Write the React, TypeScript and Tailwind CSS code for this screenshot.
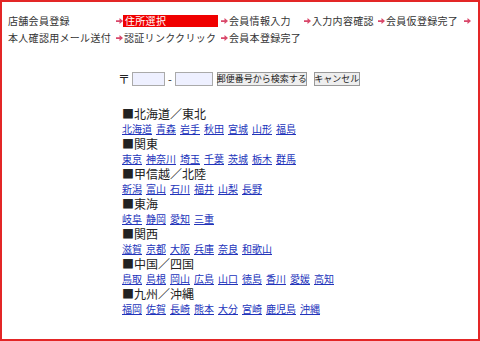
const regions: { name: string; prefs: string[] }[] = [
  { name: "北海道／東北", prefs: ["北海道", "青森", "岩手", "秋田", "宮城", "山形", "福島"] },
  { name: "関東", prefs: ["東京", "神奈川", "埼玉", "千葉", "茨城", "栃木", "群馬"] },
  { name: "甲信越／北陸", prefs: ["新潟", "富山", "石川", "福井", "山梨", "長野"] },
  { name: "東海", prefs: ["岐阜", "静岡", "愛知", "三重"] },
  { name: "関西", prefs: ["滋賀", "京都", "大阪", "兵庫", "奈良", "和歌山"] },
  { name: "中国／四国", prefs: ["鳥取", "島根", "岡山", "広島", "山口", "徳島", "香川", "愛媛", "高知"] },
  { name: "九州／沖縄", prefs: ["福岡", "佐賀", "長崎", "熊本", "大分", "宮崎", "鹿児島", "沖縄"] },
];

function Arrow() {
  return (
    <svg width="8" height="8" viewBox="0 0 8 8">
      <path d="M0 3h4V0.5L8 4 4 7.5V5H0z" fill="#d9476a" />
    </svg>
  );
}

function Step({ label, active }: { label: string; active?: boolean }) {
  return (
    <>
      <div className="flex h-[17px] items-center pl-[3px]">
        <Arrow />
      </div>
      <div className="flex h-[17px] items-center">
        <span
          className={
            active
              ? "flex h-[12px] w-full items-center bg-[#f00000] pl-[2px] text-white"
              : "pl-[1px]"
          }
        >
          {label}
        </span>
      </div>
    </>
  );
}

export default function App() {
  return (
    <div
      className="h-[341px] w-[480px] overflow-hidden border-2 border-[#e32626] bg-white text-[#333]"
      style={{ fontFamily: '"Noto Sans CJK JP", sans-serif' }}
    >
      <div className="grid grid-cols-[105px_10px_95px_10px_73px_10px_64px_10px_76px_10px] whitespace-nowrap pl-[6px] pt-[10px] text-[10px] leading-[17px] tracking-[0.3px]">
        <div className="flex h-[17px] items-center">店舗会員登録</div>
        <Step label="住所選択" active />
        <Step label="会員情報入力" />
        <Step label="入力内容確認" />
        <Step label="会員仮登録完了" />
        <div className="flex h-[17px] items-center pl-[3px]">
          <Arrow />
        </div>
        <div className="flex h-[17px] items-center">本人確認用メール送付</div>
        <Step label="認証リンククリック" />
        <Step label="会員本登録完了" />
      </div>

      <div className="pl-[116px] pt-[26px]">
        <div className="flex h-[14px] items-center whitespace-nowrap text-[11px] text-[#222]">
          <span className="mr-[2px] text-[12px] leading-[14px]">〒</span>
          <input className="h-[14px] w-[33px] border border-[#aaa] bg-[#eef0ff] outline-none" />
          <span className="mx-[3px] leading-[14px]">-</span>
          <input className="h-[14px] w-[38px] border border-[#aaa] bg-[#eef0ff] outline-none" />
          <button className="ml-[4px] flex h-[14px] w-[90px] items-center justify-center border border-[#999] bg-[#eeeeee] text-[9px] leading-[12px] text-[#222]">
            郵便番号から検索する
          </button>
          <button className="ml-[7px] flex h-[14px] w-[46px] items-center justify-center border border-[#999] bg-[#eeeeee] text-[9px] leading-[12px] text-[#222]">
            キャンセル
          </button>
        </div>

        <div className="mt-[20px] pl-[4px]">
          {regions.map((r) => (
            <div key={r.name}>
              <div className="flex h-[15px] items-center whitespace-nowrap text-[12px] text-[#222]">
                ■{r.name}
              </div>
              <div className="flex h-[15px] items-center gap-[4px] whitespace-nowrap text-[10px]">
                {r.prefs.map((p) => (
                  <a key={p} href="#" className="text-[#2233bb] underline">
                    {p}
                  </a>
                ))}
              </div>
            </div>
          ))}
        </div>
      </div>
    </div>
  );
}
